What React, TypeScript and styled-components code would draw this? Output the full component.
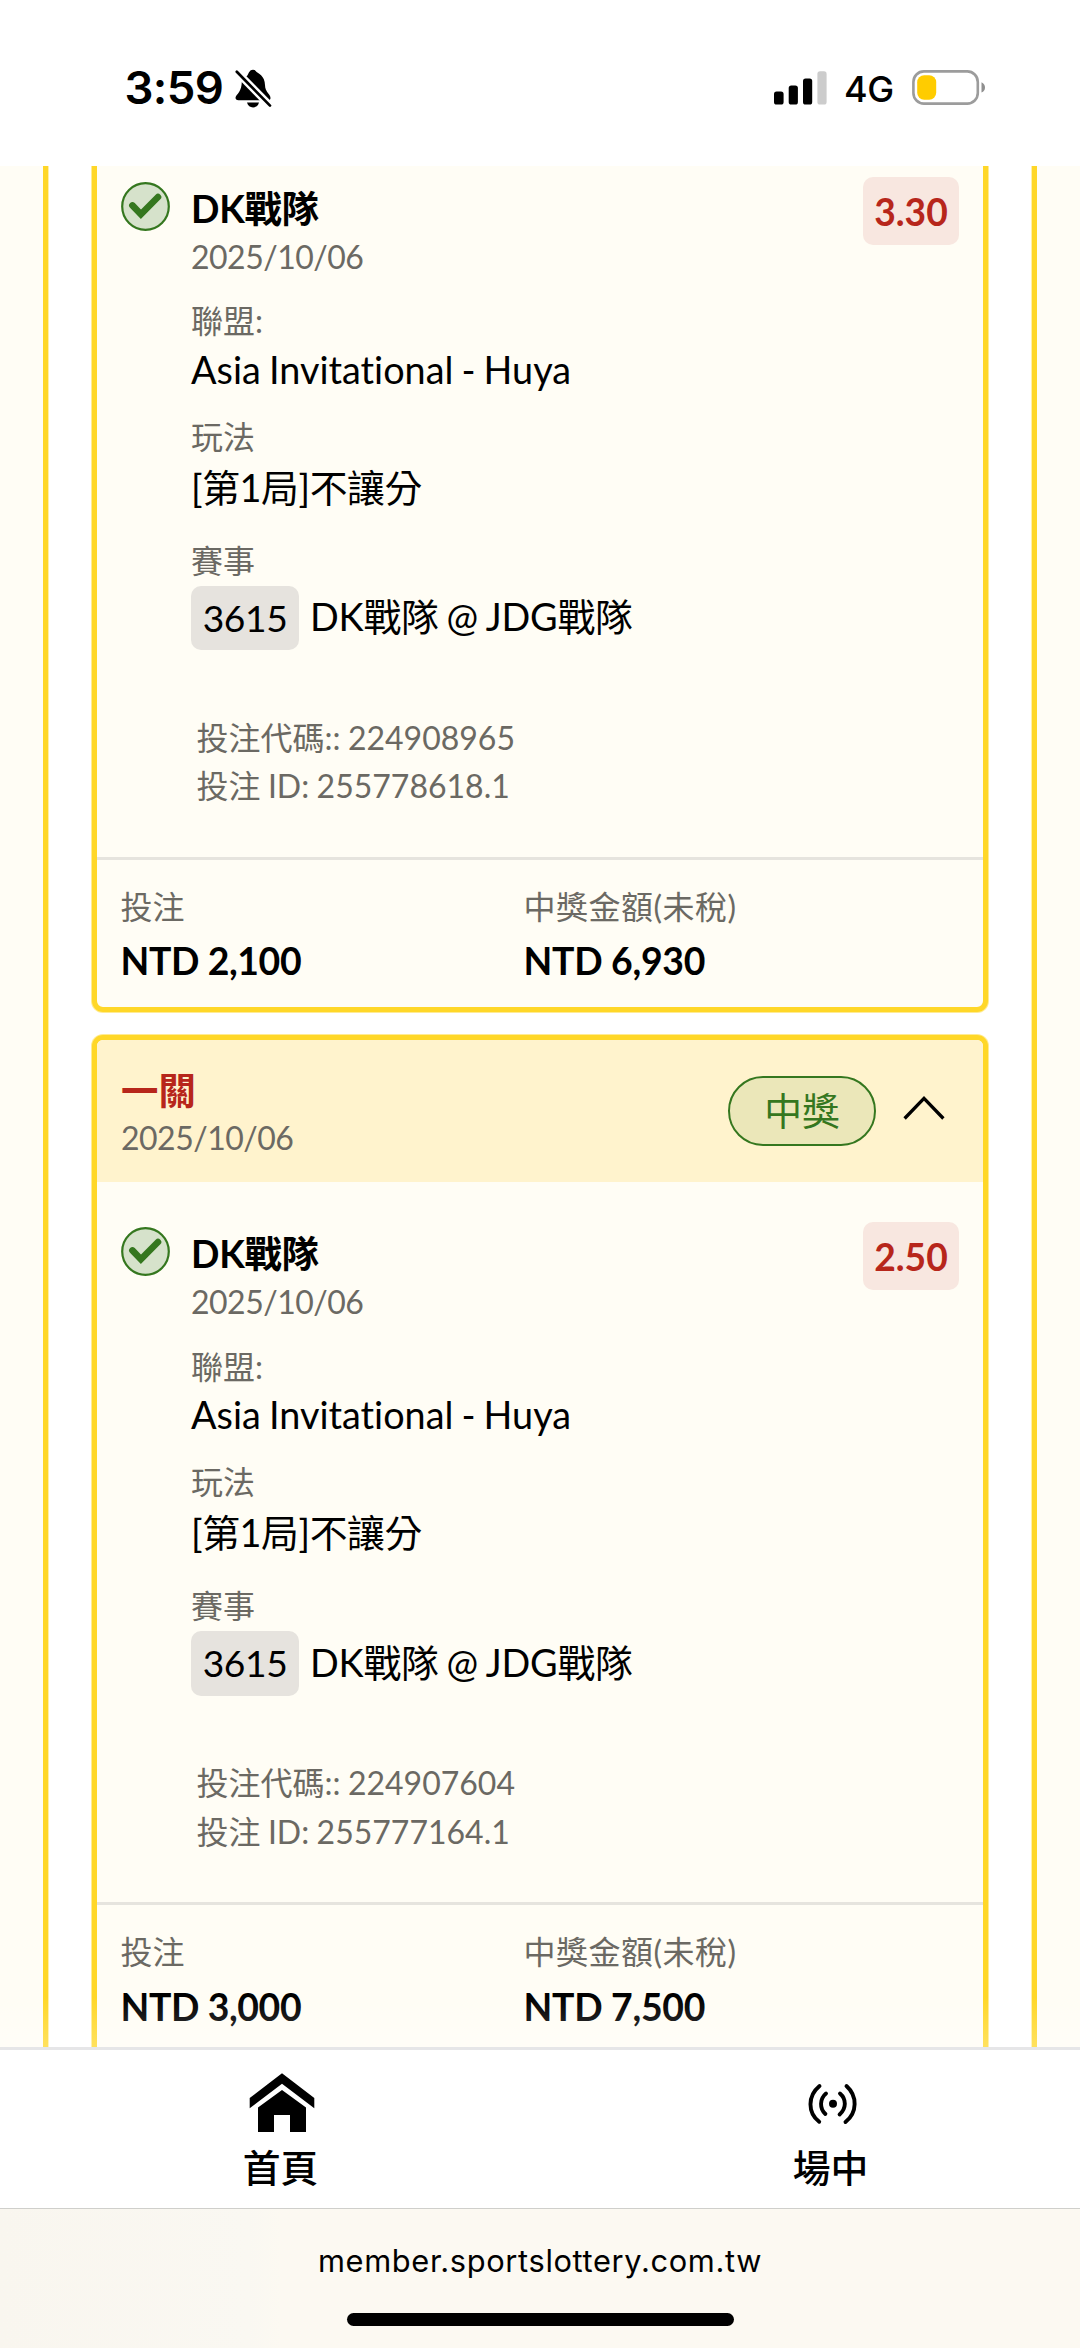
import React from "react";
import styled, { createGlobalStyle } from "styled-components";

const color = {
  yellow: "#ffd728",
  cream: "#fffdf5",
  header: "#fff3cd",
  muted: "#6b6963",
  red: "#b7261b",
  green: "#35771f",
  line: "#e6e4de",
};

const GlobalStyle = createGlobalStyle`
  * { box-sizing: border-box; }
  body {
    margin: 0;
    background: #fff;
    color: #000;
    font-family: Lato, "Noto Sans CJK TC", sans-serif;
    font-variant-ligatures: none;
  }
`;

const Screen = styled.div`
  display: flex;
  flex-direction: column;
  width: 1080px;
  height: 2348px;
  overflow: hidden;
  background: #fff;
`;

/* ---------- status bar ---------- */

const StatusBar = styled.header`
  display: flex;
  justify-content: space-between;
  height: 166px;
  flex: none;
  padding: 60px 93px 0 124.5px;
  font-family: Inter, sans-serif;
`;

const StatusGroup = styled.div`
  display: flex;
  align-items: center;
  height: 56px;
`;

const Clock = styled.span`
  font-size: 45.5px;
  font-weight: 600;
  line-height: 56px;
  letter-spacing: -0.6px;
  width: 110px;
`;

const Network = styled.span`
  font-size: 36px;
  font-weight: 500;
  line-height: 56px;
  letter-spacing: -0.5px;
  width: 68px;
  margin: 2px 0 0 17px;
`;

/* ---------- scrolling list ---------- */

const Viewport = styled.main`
  position: relative;
  display: flex;
  height: 1881px;
  flex: none;
  padding: 0 43px;
  overflow: hidden;
  background: ${color.cream};
`;

const BottomFade = styled.div`
  position: absolute;
  left: 0;
  right: 0;
  bottom: 0;
  height: 50px;
  background: linear-gradient(rgba(255, 255, 255, 0), rgba(255, 255, 255, 0.25));
`;

const Panel = styled.section`
  width: 994px;
  height: 1881px;
  padding: 0 44px;
  background: #fff;
  border: solid ${color.yellow};
  border-width: 0 5px;
  box-shadow: inset 1px 0 0 #ffefa9, inset -1px 0 0 #ffefa9;
`;

const Cards = styled.div`
  display: flex;
  flex-direction: column;
  gap: 23px;
  margin-top: -34.6px;
`;

const Card = styled.article`
  border: 5px solid ${color.yellow};
  border-radius: 11px;
  box-shadow: 0 0 0 1px #ffeb93;
  background: ${color.cream};
  overflow: hidden;
`;

const CardHeader = styled.div`
  display: flex;
  height: 141.7px;
  padding: 0 38px 0 24px;
  background: ${color.header};
  align-items: center;
`;

const HeaderText = styled.div`
  flex: 1;
  align-self: flex-start;
  padding-top: 26px;
`;

const Small = styled.div<{ $top?: number; $line?: number; $spacing?: number }>`
  margin-top: ${(p) => p.$top ?? 0}px;
  font-size: 32px;
  line-height: ${(p) => p.$line ?? 46}px;
  letter-spacing: ${(p) => p.$spacing ?? 0}px;
  word-spacing: -0.8px;
  color: ${color.muted};
  white-space: nowrap;
`;

const Large = styled.div<{ $top?: number; $bold?: boolean; $red?: boolean; $spacing?: number }>`
  margin-top: ${(p) => p.$top ?? 0}px;
  font-size: ${(p) => (p.$bold ? 37.4 : 37.8)}px;
  line-height: 50px;
  letter-spacing: ${(p) => p.$spacing ?? 0}px;
  word-spacing: ${(p) => (p.$bold ? 0 : -1.6)}px;
  font-weight: ${(p) => (p.$bold ? 700 : 400)};
  color: ${(p) => (p.$red ? color.red : "#000")};
  white-space: nowrap;
`;

const Pill = styled.span`
  width: 148px;
  height: 70px;
  margin-right: 27px;
  border: 2px solid ${color.green};
  border-radius: 35px;
  background: #ebe7b9;
  color: ${color.green};
  font-size: 37.8px;
  line-height: 65px;
  text-align: center;
`;

const CardBody = styled.div`
  display: flex;
  align-items: flex-start;
  height: 720.6px;
  padding: 46.7px 24px 0 23.5px;
`;

const Details = styled.div`
  flex: 1;
  margin: 1px 0 0 21.5px;
`;

const Odds = styled.span`
  width: 96px;
  height: 67.7px;
  margin-top: -6px;
  border-radius: 10px;
  background: #f8e7e0;
  color: ${color.red};
  font-size: 37.2px;
  font-weight: 700;
  line-height: 70.5px;
  text-align: center;
`;

const Match = styled.div`
  display: flex;
  align-items: flex-start;
  gap: 11px;
  margin-top: 2.2px;
`;

const Chip = styled.span`
  width: 108px;
  height: 64.3px;
  border-radius: 10px;
  background: #e6e3de;
  font-size: 37.2px;
  letter-spacing: -0.4px;
  line-height: 64px;
  text-align: center;
`;

const Codes = styled.div`
  margin: 63.8px 0 0 5.5px;
`;

const CardFooter = styled.div`
  display: grid;
  grid-template-columns: 403px 1fr;
  height: 150px;
  padding: 23.5px 23.5px 0;
  border-top: 3px solid ${color.line};
`;

/* ---------- bottom bars ---------- */

const NavBar = styled.nav`
  display: flex;
  gap: 450px;
  height: 161px;
  flex: none;
  padding: 20px 0 0 232px;
  border-top: 3px solid #e6e6e8;
`;

const NavItem = styled.a`
  display: flex;
  flex-direction: column;
  align-items: center;
  width: 100px;
`;

const NavLabel = styled.span`
  margin: 7px 3px 0 0;
  font-size: 37.8px;
  font-weight: 500;
  line-height: 50px;
`;

const AddressBar = styled.footer`
  display: flex;
  flex-direction: column;
  align-items: center;
  flex: 1;
  border-top: 1px solid #cfcfcb;
  background: linear-gradient(90deg, #f9f6ef, #faf8f2 23%, #fcf9f2 26%, #fcf9f2);
  font-family: Inter, sans-serif;
`;

const Url = styled.span`
  margin-top: 28.5px;
  font-size: 30.8px;
  line-height: 46px;
  letter-spacing: 0.65px;
`;

const HomeIndicator = styled.div`
  width: 387px;
  height: 13px;
  margin-top: 29.5px;
  border-radius: 7px;
  background: #000;
`;

/* ---------- icons ---------- */

const BellOff = () => (
  <svg width="37" height="39" viewBox="0 0 37 39">
    <path
      d="M12 7C13.100 5.600 13.300 4.400 14.200 3A4.200 4.200 0 0 1 21.600 3C23 4 30 7 30 16C30 23 35.500 25 35.500 29C35.500 30.500 34.500 31.200 33.200 31.200H3.500C0.500 31.200 0 29 1 27.200C3 24 6.500 22 6.800 13C7 10.500 9 8 12 7Z"
      fill="#000"
    />
    <path d="M12 33.600H24C23 37 21 38.400 18 38.400S13 37 12 33.600Z" fill="#000" />
    <path d="M0 1L37 38.600" stroke="#fff" strokeWidth="7.500" />
    <path d="M1.800 2.800L35 36.600" stroke="#000" strokeWidth="2.700" strokeLinecap="round" />
  </svg>
);

const Signal = () => (
  <svg width="53" height="34" viewBox="0 0 53 34">
    <rect x="0" y="20.500" width="9.600" height="13" rx="2.600" />
    <rect x="14.700" y="14.500" width="9.200" height="19" rx="2.600" />
    <rect x="29" y="7.500" width="9.200" height="26" rx="2.600" />
    <rect x="43.400" y="0.300" width="9.200" height="33.200" rx="2.600" fill="#ccc" />
  </svg>
);

const Battery = () => (
  <svg width="75" height="36" viewBox="0 0 75 36">
    <rect x="1.400" y="1.400" width="64.400" height="32.200" rx="10.500" fill="none" stroke="#9c9c9c" strokeWidth="2.600" />
    <rect x="5.200" y="5.200" width="19" height="24.600" rx="7" fill="#fc0" />
    <path d="M69.500 12.200C74.200 14 74.200 21 69.500 22.600Z" fill="#8f8f8f" />
  </svg>
);

const Badge = styled.svg`
  margin-top: -1.2px;
`;

const CheckCircle = () => (
  <Badge width="49" height="49" viewBox="0 0 49 49">
    <circle cx="24.500" cy="24.500" r="23.300" fill="#d6e2cb" stroke={color.green} strokeWidth="2.200" />
    <path
      d="M11.400 23.400L19.900 32.300L37 15"
      fill="none"
      stroke={color.green}
      strokeWidth="6.600"
      strokeLinecap="round"
      strokeLinejoin="miter"
    />
  </Badge>
);

const ChevronUp = () => (
  <svg width="42" height="30" viewBox="0 0 42 30">
    <path d="M1.600 22.500L21 2.400L40.400 22.500" fill="none" stroke="#000" strokeWidth="3.300" />
  </svg>
);

const HomeIcon = () => (
  <svg width="66" height="66" viewBox="0 0 66 66">
    <path d="M33 3.300L65.300 28V38.300L33 13.800L0.700 38.300V28Z" />
    <path d="M33 20L57 37.500V62H41V45H25V62H9V37.500Z" />
  </svg>
);

const LiveIcon = () => (
  <svg width="66" height="66" viewBox="0 0 66 66">
    <g fill="none" stroke="#000" strokeWidth="3.900" strokeLinecap="round">
      <path d="M20.500 16C8.500 26 8.500 42.500 20.200 51.800" />
      <path d="M47.500 16C58.500 26 58.500 42.500 46.500 52" />
      <path d="M27 23.500C20.500 29 20.500 38.500 26.400 44" />
      <path d="M41 23.500C47.500 29 47.500 38.500 40.600 44.500" />
    </g>
    <circle cx="34" cy="33.700" r="4" />
  </svg>
);

/* ---------- data ---------- */

interface Bet {
  title?: string;
  odds: string;
  code: string;
  id: string;
  stake: string;
  payout: string;
}

const bets: Bet[] = [
  { odds: "3.30", code: "224908965", id: "255778618.1", stake: "2,100", payout: "6,930" },
  { title: "一關", odds: "2.50", code: "224907604", id: "255777164.1", stake: "3,000", payout: "7,500" },
];

const BetCard = ({ bet }: { bet: Bet }) => (
  <Card>
    {bet.title && (
      <CardHeader>
        <HeaderText>
          <Large $bold $red>{bet.title}</Large>
          <Small $top={-0.8} $spacing={-0.5}>2025/10/06</Small>
        </HeaderText>
        <Pill>中獎</Pill>
        <ChevronUp />
      </CardHeader>
    )}
    <CardBody>
      <CheckCircle />
      <Details>
        <Large $bold $spacing={-0.3}>DK戰隊</Large>
        <Small $spacing={-0.5}>2025/10/06</Small>
        <Small $top={18.4}>聯盟:</Small>
        <Large $top={0.3}>Asia Invitational - Huya</Large>
        <Small $top={19}>玩法</Small>
        <Large $top={3.4} $spacing={-0.4}>[第1局]不讓分</Large>
        <Small $top={24.6}>賽事</Small>
        <Match>
          <Chip>3615</Chip>
          <Large $top={6.3} $spacing={-0.2}>DK戰隊 @ JDG戰隊</Large>
        </Match>
        <Codes>
          <Small $line={48.4}>投注代碼:: {bet.code}</Small>
          <Small $line={48.4}>投注 ID: {bet.id}</Small>
        </Codes>
      </Details>
      <Odds>{bet.odds}</Odds>
    </CardBody>
    <CardFooter>
      <div>
        <Small>投注</Small>
        <Large $bold $top={6.8} $spacing={-0.4}>NTD {bet.stake}</Large>
      </div>
      <div>
        <Small $spacing={0.5}>中獎金額(未稅)</Small>
        <Large $bold $top={6.8} $spacing={-0.3}>NTD {bet.payout}</Large>
      </div>
    </CardFooter>
  </Card>
);

export default function App() {
  return (
    <Screen>
      <GlobalStyle />
      <StatusBar>
        <StatusGroup>
          <Clock>3:59</Clock>
          <BellOff />
        </StatusGroup>
        <StatusGroup>
          <Signal />
          <Network>4G</Network>
          <Battery />
        </StatusGroup>
      </StatusBar>
      <Viewport>
        <Panel>
          <Cards>
            {bets.map((bet) => (
              <BetCard key={bet.code} bet={bet} />
            ))}
          </Cards>
        </Panel>
        <BottomFade />
      </Viewport>
      <NavBar>
        <NavItem>
          <HomeIcon />
          <NavLabel>首頁</NavLabel>
        </NavItem>
        <NavItem>
          <LiveIcon />
          <NavLabel>場中</NavLabel>
        </NavItem>
      </NavBar>
      <AddressBar>
        <Url>member.sportslottery.com.tw</Url>
        <HomeIndicator />
      </AddressBar>
    </Screen>
  );
}
